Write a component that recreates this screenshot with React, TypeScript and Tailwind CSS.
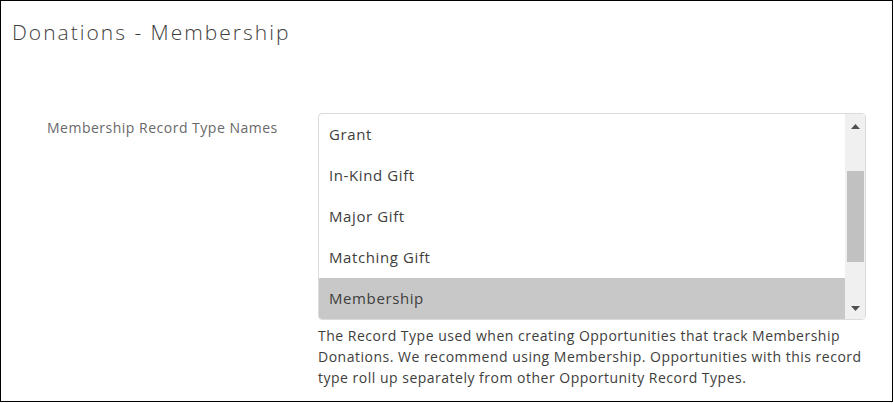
import React from "react";

const items = ["Grant", "In-Kind Gift", "Major Gift", "Matching Gift", "Membership"];

export default function App() {
  return (
    <div className="w-[894px] h-[403px] bg-white">
      <div className="w-[893px] h-[402px] border border-black bg-white font-['Open_Sans',sans-serif] text-[#3e3e3c]">
        <h1 className="pl-[11px] pt-[16px] text-[21px] leading-[30px] font-light tracking-[2px] text-[#3e3e3c]">
          Donations - Membership
        </h1>
        <div className="flex mt-[66px]">
          <div className="w-[317px] pl-[46px] pt-[5px] text-[14px] leading-[20px] tracking-[0.5px] text-[#696969]">
            Membership Record Type Names
          </div>
          <div className="w-[548px]">
            <div className="relative h-[207px] border border-[#dddbda] rounded-[4px] overflow-hidden bg-white">
              <div className="flex flex-col pr-[20px]">
                {items.map((it, i) => (
                  <div
                    key={it}
                    className={
                      i === 4
                        ? "h-[41px] pl-[10px] flex items-center text-[15px] tracking-[0.6px] text-[#3e3e3c] bg-[#c8c8c8]"
                        : "h-[41px] pl-[10px] flex items-center text-[15px] tracking-[0.6px] text-[#3e3e3c]"
                    }
                  >
                    {it}
                  </div>
                ))}
              </div>
              <div className="absolute right-0 top-0 bottom-0 w-[20px] bg-[#f0f0f0] flex flex-col items-center">
                <div className="h-[17px] flex items-end pb-[2px]">
                  <svg width="9" height="5" viewBox="0 0 9 5"><path d="M4.5 0L9 5H0z" fill="#505050" /></svg>
                </div>
                <div className="mt-[40px] w-[17px] h-[91px] bg-[#c1c1c1]" />
                <div className="flex-1" />
                <div className="h-[17px] flex items-start pt-[4px]">
                  <svg width="9" height="5" viewBox="0 0 9 5"><path d="M0 0H9L4.5 5z" fill="#505050" /></svg>
                </div>
              </div>
            </div>
            <p className="mt-[5px] w-[547px] text-[14px] leading-[21px] tracking-[0.5px] text-[#3e3e3c]">
              The Record Type used when creating Opportunities that track Membership Donations. We recommend using
              Membership. Opportunities with this record type roll up separately from other Opportunity Record Types.
            </p>
          </div>
        </div>
      </div>
    </div>
  );
}
